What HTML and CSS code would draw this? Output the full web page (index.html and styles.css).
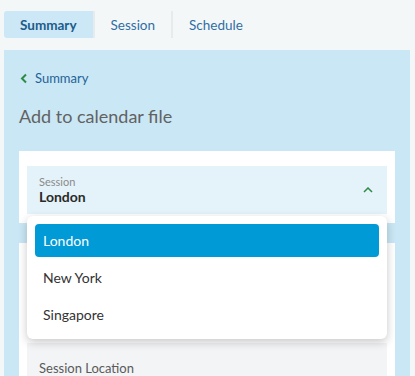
FILE: index.html
```html
<!DOCTYPE html>
<html lang="en">
<head>
  <meta charset="UTF-8">
  <meta name="viewport" content="width=device-width, initial-scale=1.0">
  <title>Add to calendar file</title>
  <link rel="stylesheet" href="styles.css">
</head>
<body>
  <nav class="tabs">
    <a class="tab active" href="#">Summary</a>
    <a class="tab" href="#">Session</a>
    <a class="tab" href="#">Schedule</a>
  </nav>

  <main class="panel">
    <a class="back" href="#">
      <svg width="8" height="11" viewBox="0 0 8 11"><path d="M6 1.5 L2 5.5 L6 9.5" fill="none" stroke="#2e8b45" stroke-width="2"/></svg>
      Summary
    </a>
    <h1>Add to calendar file</h1>

    <div class="card">
      <div class="select">
        <div class="field open">
          <div class="field-text">
            <span class="label">Session</span>
            <span class="value">London</span>
          </div>
          <svg class="caret" width="10" height="6" viewBox="0 0 10 6"><path d="M1 5 L5 1 L9 5" fill="none" stroke="#2e8b45" stroke-width="1.5"/></svg>
        </div>
        <ul class="menu">
          <li class="selected">London</li>
          <li>New York</li>
          <li>Singapore</li>
        </ul>
      </div>
    </div>

    <div class="card">
      <div class="field tall"></div>
      <div class="field disabled">
        <span class="placeholder">Session Location</span>
      </div>
    </div>
  </main>
</body>
</html>
```

FILE: styles.css
```css
html, body {
  height: 100%;
}
body {
  font-family: Lato, "Open Sans", sans-serif;
  background-color: #f4f7f8;
  margin: 0;
  padding: 11px 5px 0 4px;
  box-sizing: border-box;
  overflow: hidden;
  display: flex;
  flex-direction: column;
}
.tabs {
  display: flex;
  height: 27px;
  flex-shrink: 0;
}
.tab {
  display: flex;
  align-items: center;
  padding: 0 16px;
  font-size: 13.5px;
  color: #2f6ea5;
  text-decoration: none;
  border-right: 2px solid #e6ebee;
}
.tab:last-child {
  border-right: none;
}
.tab.active {
  background-color: #cce7f5;
  color: #1c5c8c;
  font-weight: bold;
  border-radius: 3px 0 0 3px;
}
.panel {
  flex: 1;
  margin-top: 12px;
  background-color: #cae7f5;
  padding: 20px 15px 0;
  overflow: hidden;
}
.back {
  display: flex;
  align-items: center;
  gap: 7px;
  height: 16px;
  font-size: 13px;
  color: #1f6396;
  text-decoration: none;
  padding-left: 1px;
}
h1 {
  margin: 18px 0 23px;
  font-size: 18px;
  line-height: 24px;
  font-weight: normal;
  color: #626262;
}
.card {
  background: #fff;
  padding: 15px 8px 9px;
  margin-bottom: 20px;
  display: flex;
  flex-direction: column;
  gap: 15px;
}
.select {
  position: relative;
}
.field {
  display: flex;
  align-items: center;
  justify-content: space-between;
  height: 48px;
  box-sizing: border-box;
  padding: 0 12px;
  background: #e4f2f9;
  flex-shrink: 0;
}
.field.tall {
  height: 70px;
}
.field-text {
  display: flex;
  flex-direction: column;
}
.label {
  font-size: 11px;
  line-height: 13px;
  color: #8a8a8a;
}
.value {
  font-size: 14px;
  line-height: 17px;
  font-weight: bold;
  color: #2a2a2a;
}
.caret {
  margin-right: 2px;
}
.field.disabled {
  background: #f2f4f6;
  padding-top: 2px;
}
.placeholder {
  font-size: 13px;
  color: #5a5a5a;
}
.menu {
  position: absolute;
  top: calc(100% + 2px);
  left: 0;
  right: 0;
  margin: 0;
  padding: 8px;
  list-style: none;
  background: #fff;
  border-radius: 6px;
  box-shadow: 0 3px 10px rgba(0, 0, 0, 0.22);
  display: flex;
  flex-direction: column;
  gap: 3px;
  z-index: 2;
}
.menu li {
  height: 34px;
  display: flex;
  align-items: center;
  padding: 0 8px;
  font-size: 14px;
  color: #333;
  border-radius: 4px;
}
.menu li.selected {
  background: #009ad7;
  color: #fff;
  height: 33px;
}
```
